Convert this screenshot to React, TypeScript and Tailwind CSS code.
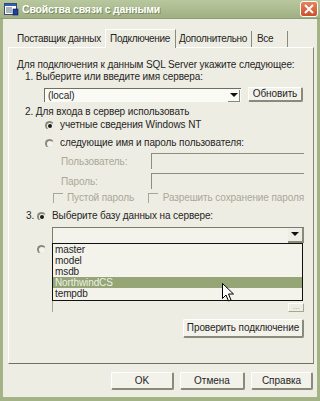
import React from 'react'

// XP olive-theme "Data Link Properties" dialog, Connection tab

function TitleIcon() {
    return (
        <svg width="15" height="13" viewBox="0 0 15 13" className="shrink-0">
            <rect x="0.5" y="0.5" width="12" height="11" fill="#ffffff" stroke="#3a4a6a" />
            <rect x="1" y="1" width="11" height="2" fill="#2f5fb0" />
            <rect x="2" y="4.5" width="6" height="1" fill="#5a6a8a" />
            <rect x="2" y="6.5" width="6" height="1" fill="#5a6a8a" />
            <rect x="2" y="8.5" width="6" height="1" fill="#5a6a8a" />
            <rect x="9" y="6" width="5" height="6" fill="#1c3fa0" stroke="#0a1a50" strokeWidth="0.6" />
        </svg>
    )
}

function Btn({ label, className = '' }: { label: string; className?: string }) {
    return (
        <div
            className={`flex items-center justify-center bg-[#f2f1ea] border-t border-l border-t-[#ffffff] border-l-[#ffffff] border-r-2 border-b-2 border-r-[#8a8a7c] border-b-[#8a8a7c] rounded-[2px] ${className}`}
        >
            {label}
        </div>
    )
}

function Radio({ checked = false }: { checked?: boolean }) {
    return (
        <div className="w-[9px] h-[9px] rounded-full border-t-2 border-l-2 border-t-[#8b8b7c] border-l-[#8b8b7c] border-r border-b border-r-[#e8e8e0] border-b-[#e8e8e0] bg-[#f4f4ee] flex items-center justify-center shrink-0">
            {checked && <div className="w-[4px] h-[4px] rounded-full bg-[#1a1a14]" />}
        </div>
    )
}

function Check() {
    return (
        <div className="w-[10px] h-[10px] border-t border-l border-t-[#a8a898] border-l-[#a8a898] shrink-0" />
    )
}

function Arrow() {
    return (
        <svg width="8" height="5" viewBox="0 0 8 5">
            <path d="M0 0H8L4 4Z" fill="#111" />
        </svg>
    )
}

const items = ['master', 'model', 'msdb', 'NorthwindCS', 'tempdb']

export default function App() {
    return (
        <div className="w-[320px] h-[401px] flex flex-col bg-[#a3b386] font-['Liberation_Sans',Arial,sans-serif] text-[10px] leading-[12px] text-[#26261e] whitespace-nowrap overflow-hidden select-none">
            {/* title bar */}
            <div className="h-[19px] flex items-center bg-gradient-to-b from-[#b9c79e] to-[#a0b083] pl-[4px] pr-[2px] border-b border-[#8e9d72]">
                <TitleIcon />
                <span className="ml-[3px] text-white font-bold text-[10.5px] tracking-[-0.2px] [text-shadow:1px_1px_0_#7d8c63]">
                    Свойства связи с данными
                </span>
                <div className="ml-auto w-[18px] h-[16px] rounded-[3px] border border-white bg-gradient-to-b from-[#e8825c] to-[#c9502c] flex items-center justify-center">
                    <svg width="10" height="10" viewBox="0 0 10 10">
                        <path d="M1 1L9 9M9 1L1 9" stroke="#fff" strokeWidth="2" />
                    </svg>
                </div>
            </div>

            {/* body */}
            <div className="flex-1 mx-[3px] mb-[4px] bg-[#eeede4] flex flex-col">
                {/* tabs */}
                <div className="h-[28px] flex items-end pl-[7px] pr-[3px] tracking-[-0.3px]">
                    <div className="h-[16px] w-[95px] flex items-center pl-[7px]">Поставщик данных</div>
                    <div className="h-[19px] w-[71px] flex items-center pl-[4px] bg-[#eeede4] border-t border-l border-white border-r border-r-[#8a8a7a] -mb-px relative">
                        Подключение
                    </div>
                    <div className="h-[16px] w-[76px] flex items-center pl-[3px] border-r border-[#8a8a7a]">Дополнительно</div>
                    <div className="h-[16px] w-[36px] flex items-center pl-[5px] border-r border-[#8a8a7a]">Все</div>
                </div>

                {/* panel */}
                <div className="h-[317px] ml-[5px] mr-[3px] border-t border-l border-white border-r border-b border-r-[#86867a] border-b-[#6f6f62] flex flex-col pl-[8px] pr-[9px] tracking-[-0.1px]">
                    <div className="mt-[11px] h-[12px]">Для подключения к данным SQL Server укажите следующее:</div>
                    <div className="h-[12px] ml-[8px]">1. Выберите или введите имя сервера:</div>

                    <div className="mt-[4px] h-[15px] flex">
                        <div className="ml-[27px] w-[197px] h-[14px] mt-[1px] bg-[#fbfbf6] border-t border-l border-[#6e6e62] flex items-center pl-[3px]">
                            <span className="flex-1">(local)</span>
                            <div className="w-[12px] h-[12px] mr-[1px] flex items-center justify-center border-r border-b border-[#8a8a7a]">
                                <Arrow />
                            </div>
                        </div>
                        <Btn label="Обновить" className="ml-[7px] w-[55px] h-[15px]" />
                    </div>

                    <div className="mt-[4px] h-[12px] ml-[8px]">2. Для входа в сервер использовать</div>
                    <div className="mt-[1px] h-[12px] ml-[28px] flex items-center gap-[6px]">
                        <Radio checked />
                        <span>учетные сведения Windows NT</span>
                    </div>
                    <div className="mt-[6px] h-[12px] ml-[28px] flex items-center gap-[6px]">
                        <Radio />
                        <span>следующие имя и пароль пользователя:</span>
                    </div>

                    <div className="mt-[4px] h-[17px] flex items-center text-[#aaa897]">
                        <span className="ml-[44px] w-[90px] mt-[1px]">Пользователь:</span>
                        <div className="flex-1 h-[16px] self-start border-t border-l border-[#8e8e80]" />
                    </div>
                    <div className="mt-[3px] h-[17px] flex items-center text-[#aaa897]">
                        <span className="ml-[44px] w-[90px] mt-[1px]">Пароль:</span>
                        <div className="flex-1 h-[16px] self-start border-t border-l border-[#8e8e80]" />
                    </div>

                    <div className="mt-[1px] h-[13px] flex items-center text-[#aaa897]">
                        <div className="ml-[36px]">
                            <Check />
                        </div>
                        <span className="ml-[4px] w-[81px]">Пустой пароль</span>
                        <Check />
                        <span className="ml-[5px]">Разрешить сохранение пароля</span>
                    </div>

                    <div className="mt-[6px] h-[12px] flex items-center">
                        <span className="ml-[9px] w-[11px]">3.</span>
                        <Radio checked />
                        <span className="ml-[6px]">Выберите базу данных на сервере:</span>
                    </div>

                    <div className="mt-[5px] h-[16px] ml-[35px] bg-[#f3f3ec] border-t border-l border-[#7c7c6e] flex justify-end">
                        <div className="w-[16px] h-[15px] flex items-center justify-center border-r-2 border-b-2 border-[#8a8a7a] bg-[#efeee6]">
                            <Arrow />
                        </div>
                    </div>

                    {/* attach file area, partly hidden by the open list */}
                    <div className="h-[69px] flex relative">
                        <div className="ml-[20px] mt-[2px]">
                            <Radio />
                        </div>
                        <div className="ml-[6px] flex-1 border-l border-[#a6a696] flex items-end justify-end">
                            <div className="w-[16px] h-[9px] border-t border-l border-white border-r border-b border-r-[#a6a696] border-b-[#a6a696] text-[8px] leading-[6px] text-[#9a9a8a] text-center">
                                ...
                            </div>
                        </div>
                        <div className="absolute left-[35px] top-0 w-[251px] h-[58px] bg-[#f3f3ec] border border-[#111] flex flex-col">
                            {items.map((it) => (
                                <div
                                    key={it}
                                    className={`h-[11px] leading-[11px] pl-[2px] ${it === 'NorthwindCS' ? 'bg-[#95a576] text-[#eef0e6]' : ''}`}
                                >
                                    {it}
                                </div>
                            ))}
                        </div>
                        <svg className="absolute left-[205px] top-[40px]" width="12" height="19" viewBox="0 0 12 19">
                            <path d="M0.5 0.5V15.5L4 12L6.5 18L9 17L6.5 11H11.5Z" fill="#fff" stroke="#000" strokeWidth="1" />
                        </svg>
                    </div>

                    <div className="mt-[7px] flex justify-end">
                        <Btn label="Проверить подключение" className="w-[121px] h-[19px]" />
                    </div>
                </div>

                {/* dialog buttons */}
                <div className="mt-[8px] flex justify-end pr-[4px]">
                    <Btn label="OK" className="w-[63px] h-[18px]" />
                    <Btn label="Отмена" className="ml-[6px] w-[65px] h-[18px]" />
                    <Btn label="Справка" className="ml-[6px] w-[62px] h-[18px]" />
                </div>
            </div>
        </div>
    )
}
